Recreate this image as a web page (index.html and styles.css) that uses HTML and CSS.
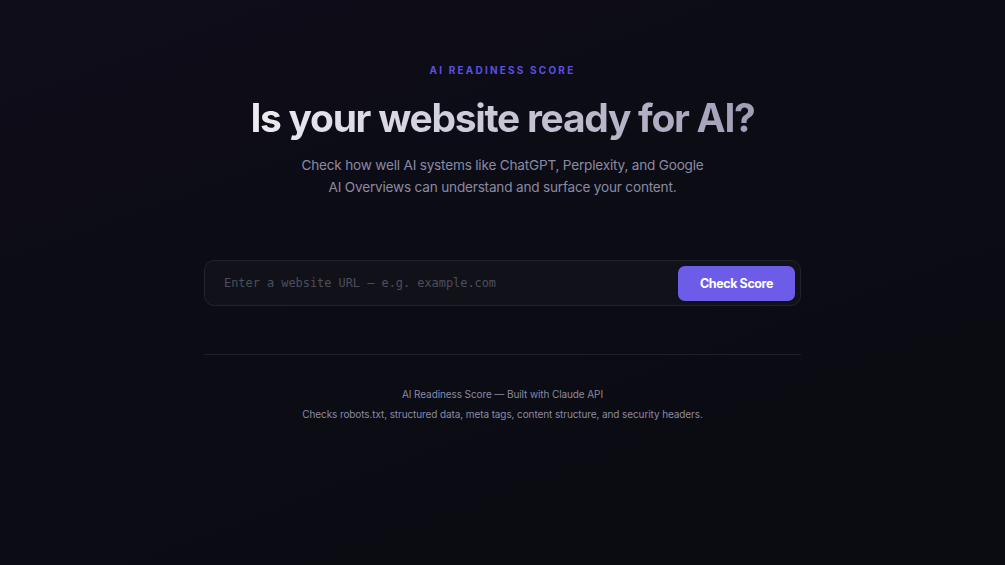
FILE: index.html
```html
<!DOCTYPE html>
<html lang="en">
<head>
<meta charset="utf-8">
<title>AI Readiness Score</title>
<link rel="stylesheet" href="styles.css">
</head>
<body>
<main class="page">
  <section class="hero">
    <p class="eyebrow">AI READINESS SCORE</p>
    <h1 class="title">Is your website ready for AI?</h1>
    <p class="lead">Check how well AI systems like ChatGPT, Perplexity, and Google<br>AI Overviews can understand and surface your content.</p>
  </section>
  <form class="search" onsubmit="return false">
    <input class="search-input" type="text" placeholder="Enter a website URL — e.g. example.com">
    <button class="search-btn" type="submit">Check Score</button>
  </form>
  <hr class="divider">
  <footer class="foot">
    <p class="foot-line">AI Readiness Score — Built with Claude API</p>
    <p class="foot-line">Checks robots.txt, structured data, meta tags, content structure, and security headers.</p>
  </footer>
</main>
</body>
</html>
```
FILE: styles.css
```css
* { box-sizing: border-box; }
html, body { margin: 0; height: 100%; }
body {
  background: linear-gradient(160deg, #0e0d19 0%, #0c0c15 45%, #0a0c11 100%);
  background-color: #0b0c12;
  font-family: Inter, "Noto Sans", sans-serif;
  color: #e6e6ee;
  min-height: 565px;
}
.page {
  width: 597px;
  margin: 0 auto;
  padding-top: 63px;
  display: flex;
  flex-direction: column;
}
.hero { text-align: center; display: flex; flex-direction: column; align-items: center; }
.eyebrow {
  margin: 0;
  font-size: 10px;
  font-weight: 700;
  letter-spacing: 2.2px;
  color: #5b4fe3;
  line-height: 14px;
}
.title {
  margin: 17px 0 0;
  font-size: 39px;
  font-weight: 700;
  letter-spacing: -1.3px;
  line-height: 48px;
  background: linear-gradient(90deg, #ececf2 0%, #c9c7d6 50%, #a19db6 100%);
  -webkit-background-clip: text;
  background-clip: text;
  color: transparent;
  white-space: nowrap;
}
.lead {
  margin: 12px 0 0;
  font-size: 13.6px;
  line-height: 22px;
  color: #8b8aa3;
  letter-spacing: -0.2px;
}
.search {
  margin-top: 62px;
  height: 46px;
  display: flex;
  align-items: center;
  background: #111219;
  border: 1px solid #22232d;
  border-radius: 10px;
  padding: 0 5px 0 17px;
}
.search-input {
  flex: 1;
  background: transparent;
  border: 0;
  outline: none;
  font-family: "DejaVu Sans Mono", monospace;
  font-size: 11.9px;
  color: #d0d0dc;
}
.search-input::placeholder { color: #4d4e5c; }
.search-btn {
  height: 35px;
  width: 117px;
  border: 0;
  border-radius: 7px;
  background: #6c5ce7;
  color: #fff;
  font-family: Inter, "Noto Sans", sans-serif;
  font-size: 12.5px;
  font-weight: 700;
  letter-spacing: -0.4px;
  cursor: pointer;
}
.divider {
  margin: 48px 0 0;
  border: 0;
  height: 1px;
  background: #20212b;
}
.foot { text-align: center; padding-top: 32px; }
.foot-line {
  margin: 0 0 6px;
  font-size: 10px;
  line-height: 14px;
  color: #8a8aa2;
  letter-spacing: -0.1px;
}
```
